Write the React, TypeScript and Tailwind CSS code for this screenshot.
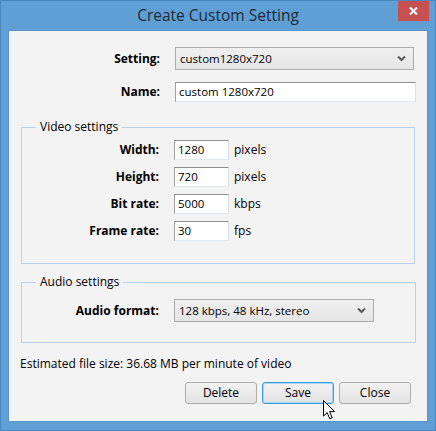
const font = { fontFamily: '"Open Sans", "Noto Sans", sans-serif' }

function Chevron() {
  return (
    <svg width="9" height="7" viewBox="0 0 9 7" className="shrink-0">
      <path d="M1 1.5 L4.5 5 L8 1.5" fill="none" stroke="#5a5a5a" strokeWidth="2" />
    </svg>
  )
}

function Select({ value, width }: { value: string; width: string }) {
  return (
    <div
      className={`${width} h-[23px] flex items-center justify-between pl-[4px] pr-[7px] border border-[#acacac] bg-gradient-to-b from-[#f0f0f0] to-[#e5e5e5] text-[11.5px] text-black`}
    >
      <span>{value}</span>
      <Chevron />
    </div>
  )
}

function Field({ value, width }: { value: string; width: string }) {
  return (
    <div
      className={`${width} h-[20px] flex items-center pl-[3px] bg-white border border-[#abadb3] border-t-[#8e8f8f] border-l-[#a0a0a0] border-r-[#dbdfe6] border-b-[#e3e9ef] text-[11.5px] text-black`}
    >
      {value}
    </div>
  )
}

const videoRows = [
  { label: 'Width:', value: '1280', unit: 'pixels' },
  { label: 'Height:', value: '720', unit: 'pixels' },
  { label: 'Bit rate:', value: '5000', unit: 'kbps' },
  { label: 'Frame rate:', value: '30', unit: 'fps' },
]

function Cursor() {
  return (
    <svg
      width="13"
      height="20"
      viewBox="0 0 13 20"
      className="absolute left-[322px] top-[399px]"
    >
      <path
        d="M0.5 0.5 L0.5 16 L4.2 12.6 L6.8 18.8 L9.2 17.8 L6.6 11.6 L11.5 11.6 Z"
        fill="#fff"
        stroke="#000"
        strokeWidth="1"
        strokeLinejoin="round"
      />
    </svg>
  )
}

export default function App() {
  return (
    <div
      className="relative w-[436px] h-[431px] bg-[#5f9fd3] border border-[#4a87bd] flex flex-col"
      style={font}
    >
      <div className="h-[29px] flex items-center justify-center text-[15.5px] text-[#1e2b3a]">
        Create Custom Setting
      </div>
      <div className="absolute top-0 right-[6px] w-[31px] h-[20px] bg-[#c75050] flex items-center justify-center">
        <svg width="9" height="8" viewBox="0 0 9 8">
          <path d="M1 0.5 L8 7.5 M8 0.5 L1 7.5" stroke="#fff" strokeWidth="2" />
        </svg>
      </div>

      <div className="ml-[7px] w-[420px] h-[392px] bg-[#f3f3f3] border border-[#5a93c6] flex flex-col">
        <div className="pt-[16px] grid grid-cols-[151px_auto] gap-x-[15px] gap-y-[12px] items-center">
          <div className="text-right text-[12px] font-bold text-black">Setting:</div>
          <Select value="custom1280x720" width="w-[239px]" />
          <div className="text-right text-[12px] font-bold text-black">Name:</div>
          <Field value="custom 1280x720" width="w-[241px]" />
        </div>

        <fieldset className="mt-[17px] ml-[12px] w-[394px] border border-[#b9d1ea] pt-[5px] pb-[22px]">
          <legend className="ml-[14px] px-[4px] h-[16px] text-[12px] text-black leading-[16px]">
            Video settings
          </legend>
          <div className="grid grid-cols-[137px_auto_auto] justify-start gap-x-[15px] gap-y-[7px] items-center">
            {videoRows.map((r) => (
              <div key={r.label} className="contents">
                <div className="text-right text-[12px] font-bold text-black">{r.label}</div>
                <Field value={r.value} width="w-[55px]" />
                <div className="-ml-[10px] text-[12px] text-black">{r.unit}</div>
              </div>
            ))}
          </div>
        </fieldset>

        <fieldset className="mt-[10px] ml-[12px] w-[395px] border border-[#b9d1ea] pt-[9px] pb-[20px]">
          <legend className="ml-[14px] px-[4px] h-[16px] text-[12px] text-black leading-[16px]">
            Audio settings
          </legend>
          <div className="grid grid-cols-[137px_auto] justify-start gap-x-[15px] items-center">
            <div className="text-right text-[12px] font-bold text-black">Audio format:</div>
            <Select value="128 kbps, 48 kHz, stereo" width="w-[200px]" />
          </div>
        </fieldset>

        <div className="mt-[13px] pl-[11px] text-[12px] text-black leading-[16px]">
          Estimated file size: 36.68 MB per minute of video
        </div>

        <div className="mt-[10px] pr-[16px] flex justify-end gap-[5px]">
          {['Delete', 'Save', 'Close'].map((b) => (
            <div
              key={b}
              className={`w-[72px] h-[22px] flex items-center justify-center rounded-[3px] border bg-gradient-to-b from-[#f2f2f2] to-[#e3e3e3] text-[12px] text-black ${
                b === 'Save' ? 'border-[#3c9ad8] shadow-[inset_0_0_0_1px_#a8d7f5]' : 'border-[#acacac]'
              }`}
            >
              {b}
            </div>
          ))}
        </div>
      </div>

      <Cursor />
    </div>
  )
}
